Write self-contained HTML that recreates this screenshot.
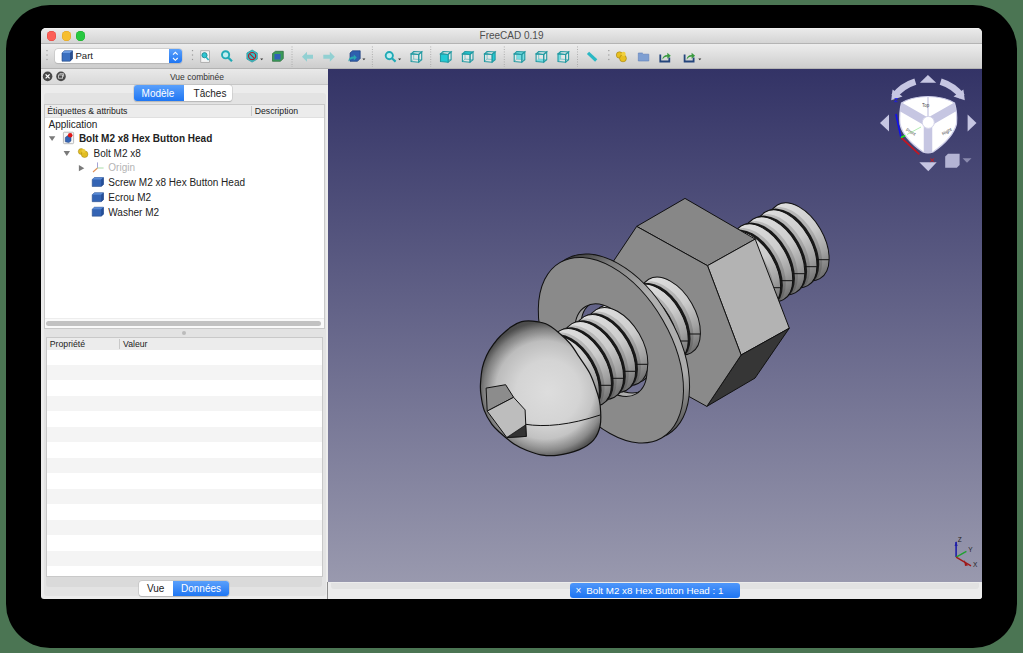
<!DOCTYPE html>
<html><head><meta charset="utf-8">
<style>
*{margin:0;padding:0;box-sizing:border-box}
html,body{width:1023px;height:653px;overflow:hidden;background:#4b7553;font-family:"Liberation Sans",sans-serif;color:#222}
.a{position:absolute}
#shadow{left:6px;top:5px;width:1011px;height:643px;background:#000;border-radius:44px}
#win{left:41px;top:28px;width:941px;height:570.6px;background:#ececec;border-radius:5px 5px 3px 3px;overflow:hidden}
#title{left:41px;top:28px;width:941px;height:16px;background:linear-gradient(#f4f4f4 0,#e9e9e9 1.5px,#d4d4d4 100%);border-bottom:1px solid #b4b4b4;border-radius:5px 5px 0 0}
#title .t{left:0;width:941px;top:2px;text-align:center;font-size:10px;color:#4d4d4d}
.tl{top:31.2px;width:9.4px;height:9.4px;border-radius:50%}
#toolbar{left:41px;top:44px;width:941px;height:25px;background:linear-gradient(#ededed,#cdcdcd);border-bottom:1px solid #b3b3b3}
#view{left:328px;top:69px;width:654px;height:513px;background:linear-gradient(#333366 0%,#9999ae 100%)}
#tabbar{left:328px;top:582px;width:654px;height:16.6px;background:#ececec;border-radius:0 0 3px 0}
.txt{white-space:nowrap;line-height:1}
</style></head>
<body>
<div id="shadow" class="a"></div>
<div id="win" class="a"></div>
<div id="title" class="a"><div class="a t">FreeCAD 0.19</div></div>
<div class="a tl" style="left:46.8px;background:#fc5f57;box-shadow:inset 0 0 0 0.5px #e0443e"></div>
<div class="a tl" style="left:61.7px;background:#f6be2f;box-shadow:inset 0 0 0 0.5px #dea123"></div>
<div class="a tl" style="left:76.1px;background:#27c840;box-shadow:inset 0 0 0 0.5px #1aab29"></div>
<div id="toolbar" class="a"></div>

<!-- combo -->
<div class="a" style="left:54.7px;top:48.8px;width:127px;height:14.4px;border-radius:3px;background:#fff;box-shadow:0 0 0 0.5px #c0c0c0,0 0.6px 1px #b0b0b0"></div>
<div class="a" style="left:169px;top:48.8px;width:12.7px;height:14.4px;border-radius:0 3px 3px 0;background:linear-gradient(#5aa0fb,#1f76f3)"></div>
<svg class="a" style="left:169px;top:48.8px" width="13" height="15" viewBox="0 0 13 15"><path d="M4,5.6 l2.35,-2.3 l2.35,2.3 M4,9 l2.35,2.3 l2.35,-2.3" fill="none" stroke="#fff" stroke-width="1.1"/></svg>
<svg class="a" style="left:60.5px;top:50px" width="13" height="12" viewBox="0 0 13 12"><polygon points="1,3 3.5,0.8 11.5,0.8 11.5,8.8 9,11.2 1,11.2" fill="#3a6fc0" stroke="#23457e" stroke-width="0.6"/><polygon points="1,3 3.5,0.8 11.5,0.8 9,3" fill="#6b9be0"/><polygon points="9,3 11.5,0.8 11.5,8.8 9,11.2" fill="#2a4f90"/></svg>
<div class="a txt" style="left:75.4px;top:51.3px;font-size:9.6px;color:#222">Part</div>

<!-- dock title -->
<div class="a" style="left:41px;top:69px;width:287px;height:16px;background:linear-gradient(#e9e9e9,#d9d9d9);border-bottom:1px solid #c6c6c6"></div>
<div class="a txt" style="left:41px;top:73px;width:312px;text-align:center;font-size:8.5px;color:#333">Vue combinée</div>

<!-- tab pane -->
<div class="a" style="left:44px;top:93px;width:282px;height:503px;background:#e3e3e3;border-radius:3px"></div>
<!-- tree frame -->
<div class="a" style="left:43.5px;top:104px;width:281px;height:225px;background:#fff;border:1px solid #c9c9c9"></div>
<div class="a" style="left:44.5px;top:105px;width:279px;height:12.5px;background:#ececec;border-bottom:1px solid #e0e0e0"></div>
<div class="a" style="left:251px;top:106px;width:1px;height:10px;background:#c9c9c9"></div>
<div class="a txt" style="left:47.3px;top:106.5px;font-size:8.7px;color:#222">Étiquettes &amp; attributs</div>
<div class="a txt" style="left:254.7px;top:106.5px;font-size:8.7px;color:#222">Description</div>

<!-- tree rows -->
<div class="a txt" style="left:48.5px;top:120px;font-size:10px;color:#222">Application</div>
<div class="a txt" style="left:78.9px;top:134px;font-size:10px;font-weight:bold;color:#222">Bolt M2 x8 Hex Button Head</div>
<div class="a txt" style="left:93.6px;top:148.5px;font-size:10px;color:#222">Bolt M2 x8</div>
<div class="a txt" style="left:108.3px;top:163px;font-size:10px;color:#b4b4b4">Origin</div>
<div class="a txt" style="left:108.3px;top:178px;font-size:10px;color:#222">Screw M2 x8 Hex Button Head</div>
<div class="a txt" style="left:108.3px;top:192.5px;font-size:10px;color:#222">Ecrou M2</div>
<div class="a txt" style="left:108.3px;top:207.5px;font-size:10px;color:#222">Washer M2</div>

<!-- tree scrollbar -->
<div class="a" style="left:44.5px;top:318px;width:279px;height:10px;background:#fafafa;border-top:1px solid #ededed"></div>
<div class="a" style="left:46px;top:320.7px;width:275px;height:5.8px;border-radius:3px;background:#c2c2c2"></div>

<!-- splitter -->
<div class="a" style="left:182px;top:330.5px;width:4px;height:4px;border-radius:50%;background:#bbb"></div>

<!-- property table -->
<div class="a" style="left:45.5px;top:337px;width:277px;height:239.5px;background:#fff;border:1px solid #c9c9c9"></div>
<div class="a" style="left:46.5px;top:338px;width:275px;height:12px;background:#ececec"></div>
<div class="a" style="left:119px;top:339px;width:1px;height:10px;background:#c9c9c9"></div>
<div class="a txt" style="left:49.8px;top:339.5px;font-size:8.7px;color:#222">Propriété</div>
<div class="a txt" style="left:123px;top:339.5px;font-size:8.7px;color:#222">Valeur</div>
<div class="a" style="left:46.5px;top:365px;width:275px;height:211px;background:repeating-linear-gradient(#f4f4f4 0,#f4f4f4 15.46px,#fff 15.46px,#fff 30.92px)"></div>
<!-- bottom band -->
<div class="a" style="left:46px;top:576.5px;width:276px;height:10px;background:#dadada;border-radius:0 0 3px 3px"></div>

<!-- Vue / Données -->
<div class="a" style="left:139px;top:581.3px;width:90px;height:14.4px;border-radius:3px;background:#fff;box-shadow:0 0 0 0.5px #bdbdbd, 0 0.5px 1px #aaa"></div>
<div class="a" style="left:173.2px;top:581.3px;width:55.8px;height:14.4px;border-radius:0 3px 3px 0;background:linear-gradient(#5aa0fb,#1f76f3)"></div>
<div class="a txt" style="left:147px;top:583.5px;font-size:10px;color:#222">Vue</div>
<div class="a txt" style="left:181px;top:583.5px;font-size:10px;color:#fff">Données</div>

<!-- Modele / Taches -->
<div class="a" style="left:134.4px;top:85.3px;width:97.3px;height:15.6px;border-radius:3px;background:#fff;box-shadow:0 0 0 0.5px #c4c4c4, 0 0.5px 1px #aaa"></div>
<div class="a" style="left:134.4px;top:85.3px;width:49.6px;height:15.6px;border-radius:3px 0 0 3px;background:linear-gradient(#5aa0fb,#1f76f3)"></div>
<div class="a txt" style="left:141.6px;top:89px;font-size:10px;color:#fff">Modèle</div>
<div class="a txt" style="left:193.6px;top:89px;font-size:10px;color:#222">Tâches</div>

<div id="view" class="a"></div>
<div id="tabbar" class="a"></div>
<div class="a" style="left:327px;top:582px;width:1px;height:16.6px;background:#8c8c8c"></div>
<div class="a" style="left:330.5px;top:583px;width:648px;height:5.7px;border-radius:0 0 3px 3px;background:#e2e2e2"></div>
<div class="a" style="left:570px;top:583px;width:170px;height:15px;border-radius:3px;background:linear-gradient(#4f97fa,#1d74f2)"></div>
<div class="a txt" style="left:575.5px;top:585.5px;font-size:10px;color:#fff">×</div>
<div class="a txt" style="left:586.2px;top:585.8px;font-size:9.8px;color:#fff">Bolt M2 x8 Hex Button Head : 1</div>

<!--TB-->
<svg class="a" style="left:0;top:0" width="1023" height="653" viewBox="0 0 1023 653">
<rect x="46.4" y="50.0" width="1.2" height="1.2" fill="#9a9a9a"/>
<rect x="46.4" y="54.4" width="1.2" height="1.2" fill="#9a9a9a"/>
<rect x="46.4" y="58.9" width="1.2" height="1.2" fill="#9a9a9a"/>
<rect x="191.9" y="50.0" width="1.2" height="1.2" fill="#9a9a9a"/>
<rect x="191.9" y="54.4" width="1.2" height="1.2" fill="#9a9a9a"/>
<rect x="191.9" y="58.9" width="1.2" height="1.2" fill="#9a9a9a"/>
<rect x="608.2" y="50.0" width="1.2" height="1.2" fill="#9a9a9a"/>
<rect x="608.2" y="54.4" width="1.2" height="1.2" fill="#9a9a9a"/>
<rect x="608.2" y="58.9" width="1.2" height="1.2" fill="#9a9a9a"/>
<line x1="292.0" y1="46.5" x2="292.0" y2="67" stroke="#9c9c9c" stroke-width="0.8" stroke-dasharray="0.9,1.6"/>
<line x1="372.4" y1="46.5" x2="372.4" y2="67" stroke="#9c9c9c" stroke-width="0.8" stroke-dasharray="0.9,1.6"/>
<line x1="430.7" y1="46.5" x2="430.7" y2="67" stroke="#9c9c9c" stroke-width="0.8" stroke-dasharray="0.9,1.6"/>
<line x1="504.3" y1="46.5" x2="504.3" y2="67" stroke="#9c9c9c" stroke-width="0.8" stroke-dasharray="0.9,1.6"/>
<line x1="577.5" y1="46.5" x2="577.5" y2="67" stroke="#9c9c9c" stroke-width="0.8" stroke-dasharray="0.9,1.6"/>
<rect x="200.8" y="50.8" width="8.6" height="11.5" fill="#f4f4f4" stroke="#9a9a9a" stroke-width="0.7"/>
<circle cx="204.5" cy="55.2" r="2.6" fill="#2ec6d2" stroke="#1f7f88" stroke-width="0.8"/><line x1="206" y1="57" x2="208.6" y2="60" stroke="#2ab8c4" stroke-width="1.6"/>
<circle cx="225.6" cy="54.8" r="3.6" fill="#bfeef0" stroke="#20aab6" stroke-width="1.9"/><line x1="228.2" y1="57.6" x2="232" y2="61.2" stroke="#20aab6" stroke-width="2.2"/>
<polygon points="252.1,50 257.3,53 257.3,59.1 252.1,62.1 246.9,59.1 246.9,53" fill="#2ec4cc" stroke="#2a8f96" stroke-width="0.7"/>
<circle cx="252.1" cy="56.1" r="3.6" fill="none" stroke="#b0202a" stroke-width="1.2"/><line x1="249.6" y1="53.6" x2="254.6" y2="58.6" stroke="#b0202a" stroke-width="1.2"/>
<path d="M260.2,58.4 l3,0 l-1.5,1.8z" fill="#333"/>
<polygon points="272.5,53.5 275.5,51.3 283.3,51.3 283.3,58.5 280.5,61.3 272.5,61.3" fill="#3a9a5a" stroke="#2a6a3a" stroke-width="0.7"/>
<rect x="274.5" y="54" width="6" height="5.5" fill="#3060b8"/>
<path d="M302,56.7 l5,-5 v3 h6 v4 h-6 v3 z" fill="#92d0d2"/>
<path d="M334.8,56.7 l-5,-5 v3 h-6.5 v4 h6.5 v3 z" fill="#92d0d2"/>
<polygon points="350,53 352.5,50.8 360.2,50.8 360.2,58.5 357.5,61.3 350,61.3" fill="#2f5fae" stroke="#1f3f7e" stroke-width="0.7"/>
<path d="M348.3,61.5 q0.5,-5 5.5,-5 v-2 l3,3 l-3,3 v-2 q-3,0 -5.5,3z" fill="#28a8b0"/>
<path d="M362.4,58.4 l3,0 l-1.5,1.8z" fill="#333"/>
<circle cx="389.3" cy="55.6" r="3.6" fill="#bfeef0" stroke="#20aab6" stroke-width="1.9"/><line x1="391.9" y1="58.3" x2="395.6" y2="61.6" stroke="#20aab6" stroke-width="2.2"/>
<path d="M398.1,58.4 l3,0 l-1.5,1.8z" fill="#333"/>
<polyline points="413.7,51.5 413.7,59.1 421.7,59.7" fill="none" stroke="#239aa2" stroke-width="0.8"/>
<line x1="413.7" y1="59.1" x2="411.1" y2="61.5" stroke="#239aa2" stroke-width="0.8"/>
<polygon points="411.1,53.9 413.7,51.5 421.7,51.9 418.7,54.5" fill="#f4fbfb" fill-opacity="0.35" stroke="#239aa2" stroke-width="1.1"/>
<polygon points="418.7,54.5 421.7,51.9 421.7,59.7 418.7,62.2" fill="#f4fbfb" fill-opacity="0.35" stroke="#239aa2" stroke-width="1.1"/>
<polygon points="411.1,53.9 418.7,54.5 418.7,62.2 411.1,61.5" fill="#f4fbfb" fill-opacity="0.35" stroke="#239aa2" stroke-width="1.1"/>
<polyline points="443.1,51.5 443.1,59.1 451.1,59.7" fill="none" stroke="#239aa2" stroke-width="0.8"/>
<line x1="443.1" y1="59.1" x2="440.5" y2="61.5" stroke="#239aa2" stroke-width="0.8"/>
<polygon points="440.5,53.9 443.1,51.5 451.1,51.9 448.1,54.5" fill="#f4fbfb" fill-opacity="0.35" stroke="#239aa2" stroke-width="1.1"/>
<polygon points="448.1,54.5 451.1,51.9 451.1,59.7 448.1,62.2" fill="#f4fbfb" fill-opacity="0.35" stroke="#239aa2" stroke-width="1.1"/>
<polygon points="440.5,53.9 448.1,54.5 448.1,62.2 440.5,61.5" fill="#22cad4" fill-opacity="1" stroke="#239aa2" stroke-width="1.1"/>
<polyline points="465.0,51.5 465.0,59.1 473.0,59.7" fill="none" stroke="#239aa2" stroke-width="0.8"/>
<line x1="465.0" y1="59.1" x2="462.4" y2="61.5" stroke="#239aa2" stroke-width="0.8"/>
<polygon points="462.4,53.9 465.0,51.5 473.0,51.9 470.0,54.5" fill="#22cad4" fill-opacity="1" stroke="#239aa2" stroke-width="1.1"/>
<polygon points="470.0,54.5 473.0,51.9 473.0,59.7 470.0,62.2" fill="#f4fbfb" fill-opacity="0.35" stroke="#239aa2" stroke-width="1.1"/>
<polygon points="462.4,53.9 470.0,54.5 470.0,62.2 462.4,61.5" fill="#f4fbfb" fill-opacity="0.35" stroke="#239aa2" stroke-width="1.1"/>
<polyline points="487.1,51.5 487.1,59.1 495.1,59.7" fill="none" stroke="#239aa2" stroke-width="0.8"/>
<line x1="487.1" y1="59.1" x2="484.5" y2="61.5" stroke="#239aa2" stroke-width="0.8"/>
<polygon points="484.5,53.9 487.1,51.5 495.1,51.9 492.1,54.5" fill="#f4fbfb" fill-opacity="0.35" stroke="#239aa2" stroke-width="1.1"/>
<polygon points="492.1,54.5 495.1,51.9 495.1,59.7 492.1,62.2" fill="#22cad4" fill-opacity="1" stroke="#239aa2" stroke-width="1.1"/>
<polygon points="484.5,53.9 492.1,54.5 492.1,62.2 484.5,61.5" fill="#f4fbfb" fill-opacity="0.35" stroke="#239aa2" stroke-width="1.1"/>
<polyline points="516.8,51.5 516.8,59.1 524.8,59.7" fill="none" stroke="#239aa2" stroke-width="0.8"/>
<line x1="516.8" y1="59.1" x2="514.2" y2="61.5" stroke="#239aa2" stroke-width="0.8"/>
<polygon points="516.8,51.5 524.8,51.9 524.8,59.7 516.8,59.1" fill="#22cad4" opacity="0.9"/>
<polygon points="514.2,53.9 516.8,51.5 524.8,51.9 521.8,54.5" fill="#f4fbfb" fill-opacity="0.35" stroke="#239aa2" stroke-width="1.1"/>
<polygon points="521.8,54.5 524.8,51.9 524.8,59.7 521.8,62.2" fill="#f4fbfb" fill-opacity="0.35" stroke="#239aa2" stroke-width="1.1"/>
<polygon points="514.2,53.9 521.8,54.5 521.8,62.2 514.2,61.5" fill="#f4fbfb" fill-opacity="0.35" stroke="#239aa2" stroke-width="1.1"/>
<polyline points="538.7,51.5 538.7,59.1 546.7,59.7" fill="none" stroke="#239aa2" stroke-width="0.8"/>
<line x1="538.7" y1="59.1" x2="536.1" y2="61.5" stroke="#239aa2" stroke-width="0.8"/>
<polygon points="536.1,61.5 543.7,62.2 546.7,59.7 538.7,59.1" fill="#22cad4" opacity="0.9"/>
<polygon points="536.1,53.9 538.7,51.5 546.7,51.9 543.7,54.5" fill="#f4fbfb" fill-opacity="0.35" stroke="#239aa2" stroke-width="1.1"/>
<polygon points="543.7,54.5 546.7,51.9 546.7,59.7 543.7,62.2" fill="#f4fbfb" fill-opacity="0.35" stroke="#239aa2" stroke-width="1.1"/>
<polygon points="536.1,53.9 543.7,54.5 543.7,62.2 536.1,61.5" fill="#f4fbfb" fill-opacity="0.35" stroke="#239aa2" stroke-width="1.1"/>
<polyline points="560.6,51.5 560.6,59.1 568.6,59.7" fill="none" stroke="#239aa2" stroke-width="0.8"/>
<line x1="560.6" y1="59.1" x2="558.0" y2="61.5" stroke="#239aa2" stroke-width="0.8"/>
<polygon points="558.0,53.9 560.6,51.5 560.6,59.1 558.0,61.5" fill="#22cad4" opacity="0.9"/>
<polygon points="558.0,53.9 560.6,51.5 568.6,51.9 565.6,54.5" fill="#f4fbfb" fill-opacity="0.35" stroke="#239aa2" stroke-width="1.1"/>
<polygon points="565.6,54.5 568.6,51.9 568.6,59.7 565.6,62.2" fill="#f4fbfb" fill-opacity="0.35" stroke="#239aa2" stroke-width="1.1"/>
<polygon points="558.0,53.9 565.6,54.5 565.6,62.2 558.0,61.5" fill="#f4fbfb" fill-opacity="0.35" stroke="#239aa2" stroke-width="1.1"/>
<line x1="588" y1="52.8" x2="596.2" y2="60.5" stroke="#2ab8c4" stroke-width="3.2"/>
<circle cx="619.5" cy="55" r="3.2" fill="#e8c020" stroke="#a08010" stroke-width="0.6"/><circle cx="623" cy="58.4" r="3.4" fill="#e8c020" stroke="#a08010" stroke-width="0.6"/><circle cx="623.5" cy="54" r="2.2" fill="#f0d040"/>
<path d="M638.3,53 h4 l1.2,1.2 h5.3 v6.8 h-10.5z" fill="#7f9fd2" stroke="#6080b8" stroke-width="0.6"/>
<path d="M660.3,54.5 v7 h9 v-4" fill="none" stroke="#24457c" stroke-width="1.8"/>
<path d="M662.3,59.5 q0.5,-4.5 5,-4.5 v-2.2 l3.5,3 l-3.5,3 v-2.2 q-3,0 -5,2.9z" fill="#3a9a40"/>
<path d="M684.6,54.5 v7 h9 v-4" fill="none" stroke="#24457c" stroke-width="1.8"/>
<path d="M686.6,59.5 q0.5,-4.5 5,-4.5 v-2.2 l3.5,3 l-3.5,3 v-2.2 q-3,0 -5,2.9z" fill="#3a9a40"/>
<path d="M698.3,58.4 l3,0 l-1.5,1.8z" fill="#333"/>
</svg>
<!--/TB-->
<!--NAV-->
<svg class="a" style="left:0;top:0" width="1023" height="653" viewBox="0 0 1023 653">
<polygon points="927.9,74.9 936.2,82.7 919.9,82.7" fill="#c6c6e2"/>
<polygon points="880,122.9 889,114.5 889,131.4" fill="#c6c6e2"/>
<polygon points="976.5,122.9 967.6,114.5 967.6,131.4" fill="#c6c6e2"/>
<polygon points="919.3,162.2 936.7,162.2 928.3,171.2" fill="#c6c6e2"/>
<path d="M914.4,78.5 A46.5,46.5 0 0,0 891.4,94.4 L896.5,98.4 A40.0,40.0 0 0,1 916.3,84.7 Z" fill="#c6c6e2"/>
<path d="M941.6,78.5 A46.5,46.5 0 0,1 964.6,94.4 L959.5,98.4 A40.0,40.0 0 0,0 939.7,84.7 Z" fill="#c6c6e2"/>
<polygon points="891.2,100.2 892.6,89.5 902.5,96.5" fill="#c6c6e2"/>
<polygon points="964.8,100.2 963.4,89.5 953.5,96.5" fill="#c6c6e2"/>
<defs><clipPath id="cubeclip"><path d="M928,96.5 Q944,96.5 954.5,103 Q957.5,113 956.5,124 Q953,138 933,152 Q928,154 923,152 Q903,138 900,124 Q899,113 901.5,103 Q912,96.5 928,96.5Z"/></clipPath></defs>
<path d="M928,96.5 Q944,96.5 954.5,103 Q957.5,113 956.5,124 Q953,138 933,152 Q928,154 923,152 Q903,138 900,124 Q899,113 901.5,103 Q912,96.5 928,96.5Z" fill="#fff" stroke="#d0d0ea" stroke-width="1.2"/>
<g clip-path="url(#cubeclip)"><path d="M928,122.5 L893,102.5 M928,122.5 L963,102.5 M928,122.5 L928,160" stroke="#c6c6e2" stroke-width="8.5"/></g>
<line x1="928" y1="97" x2="928" y2="117" stroke="#c6c6e2" stroke-width="1.2"/>
<circle cx="928.3" cy="122.4" r="6" fill="#fff" stroke="#d4d4ea" stroke-width="1"/>
<text x="922" y="107" font-size="4.5" font-family="Liberation Sans" fill="#111" opacity="0.8">Top</text>
<text x="906" y="133" font-size="4.5" font-family="Liberation Sans" fill="#111" opacity="0.8" transform="rotate(30 910 131)">Front</text>
<text x="941" y="134" font-size="4.5" font-family="Liberation Sans" fill="#111" opacity="0.8" transform="rotate(-30 945 131)">Right</text>
<line x1="900.9" y1="137.4" x2="919.3" y2="154.3" stroke="#c8141e" stroke-width="1.6"/>
<line x1="900.9" y1="137.4" x2="895.9" y2="114" stroke="#1010f0" stroke-width="1.6"/>
<line x1="900.9" y1="137.4" x2="905.2" y2="135.6" stroke="#20e020" stroke-width="1.6"/>
<line x1="907" y1="134.5" x2="921" y2="127" stroke="#7ee07e" stroke-width="0.6"/>
<path d="M894.5,98.5 h3 l-3,3.2 h3" fill="none" stroke="#1a1af0" stroke-width="0.8"/>
<path d="M930.5,158.3 l3.4,3.8 M933.9,158.3 l-3.4,3.8" stroke="#d01818" stroke-width="0.9"/>
<polygon points="945.2,156.5 948,153.8 959.6,153.8 959.6,165 956.8,167.7 945.2,167.7" fill="#b4b4d4"/>
<polygon points="962.6,158.3 971.5,158.3 967,162.7" fill="#8a8aae"/>
</svg>
<!--/NAV-->
<!--MISC-->
<svg class="a" style="left:0;top:0" width="1023" height="653" viewBox="0 0 1023 653">
<polygon points="48.9,136.3 55.3,136.3 52.1,141" fill="#7a7a7a"/>
<polygon points="63.6,150.9 70,150.9 66.8,156" fill="#7a7a7a"/>
<polygon points="78.9,165.1 84.3,168.2 78.9,171.3" fill="#7a7a7a"/>
<rect x="63.4" y="132.2" width="10.2" height="11.5" rx="1" fill="#f6f6f6" stroke="#a0a0a0" stroke-width="0.7"/>
<polygon points="65.3,137.5 67.5,135.8 71,136.6 71,141 68.8,142.6 65.3,141.8" fill="#3565b5" stroke="#1d3d78" stroke-width="0.5"/>
<circle cx="70.2" cy="135.2" r="2.3" fill="#e01a1a"/>
<circle cx="81.2" cy="151.5" r="2.9" fill="#e2bd22" stroke="#9e8210" stroke-width="0.5"/><circle cx="84.6" cy="154.2" r="3.3" fill="#e2bd22" stroke="#9e8210" stroke-width="0.5"/><circle cx="83.5" cy="151" r="2" fill="#eccb3a"/>
<line x1="97.5" y1="168" x2="97.5" y2="162.4" stroke="#9a9ad0" stroke-width="0.9"/><line x1="97.5" y1="168" x2="93" y2="172" stroke="#e0925a" stroke-width="1.1"/><line x1="97.5" y1="168" x2="103.6" y2="168" stroke="#a0d8a0" stroke-width="0.9"/>
<polygon points="92.2,179.5 94.5,177.5 103.5,177.5 103.5,184.5 101.2,186.5 92.2,186.5" fill="#3464b4" stroke="#22457e" stroke-width="0.5"/>
<polygon points="92.2,179.5 94.5,177.5 103.5,177.5 101.2,179.5" fill="#5a8ad4"/>
<polygon points="101.2,179.5 103.5,177.5 103.5,184.5 101.2,186.5" fill="#254e96"/>
<polygon points="92.2,194.7 94.5,192.7 103.5,192.7 103.5,199.7 101.2,201.7 92.2,201.7" fill="#3464b4" stroke="#22457e" stroke-width="0.5"/>
<polygon points="92.2,194.7 94.5,192.7 103.5,192.7 101.2,194.7" fill="#5a8ad4"/>
<polygon points="101.2,194.7 103.5,192.7 103.5,199.7 101.2,201.7" fill="#254e96"/>
<polygon points="92.2,209.2 94.5,207.2 103.5,207.2 103.5,214.2 101.2,216.2 92.2,216.2" fill="#3464b4" stroke="#22457e" stroke-width="0.5"/>
<polygon points="92.2,209.2 94.5,207.2 103.5,207.2 101.2,209.2" fill="#5a8ad4"/>
<polygon points="101.2,209.2 103.5,207.2 103.5,214.2 101.2,216.2" fill="#254e96"/>
<circle cx="47.6" cy="76.4" r="4.8" fill="#4a4a4a"/><path d="M45.6,74.4 l4,4 M49.6,74.4 l-4,4" stroke="#fff" stroke-width="1.3"/>
<circle cx="61" cy="76.4" r="4.8" fill="#4a4a4a"/><rect x="58.6" y="75" width="4" height="3.2" fill="none" stroke="#ddd" stroke-width="0.8"/><path d="M59.8,74.5 v-0.8 h3.8 v3" fill="none" stroke="#ddd" stroke-width="0.8"/>
<line x1="956.1" y1="557.1" x2="956.1" y2="542" stroke="#2020a8" stroke-width="1.6"/><polygon points="954.6,546 957.6,546 956.1,541" fill="#2020a8"/>
<line x1="956.1" y1="557.1" x2="966.4" y2="551.4" stroke="#20a030" stroke-width="1.4"/>
<line x1="956.1" y1="557.1" x2="971" y2="565.8" stroke="#a01818" stroke-width="1.4"/><polygon points="964,560 968,565.5 965,566" fill="#a01818"/>
<text x="957.8" y="541.5" font-size="6.5" font-family="Liberation Sans" fill="#222">Z</text>
<text x="968.3" y="552" font-size="6.5" font-family="Liberation Sans" fill="#222">Y</text>
<text x="973" y="567" font-size="6.5" font-family="Liberation Sans" fill="#222">X</text>
</svg>
<!--/MISC-->
<!--BOLT-->
<svg class="a" style="left:0;top:0" width="1023" height="653" viewBox="0 0 1023 653">
<defs>
<linearGradient id="cg" x1="0" y1="0" x2="0" y2="1"><stop offset="0" stop-color="#dedede"/><stop offset="0.45" stop-color="#cccccc"/><stop offset="0.75" stop-color="#a2a2a2"/><stop offset="1" stop-color="#6e6e6e"/></linearGradient>
<radialGradient id="hg" cx="548" cy="392" r="80" gradientUnits="userSpaceOnUse"><stop offset="0" stop-color="#dddddd"/><stop offset="0.4" stop-color="#d4d4d4"/><stop offset="0.7" stop-color="#b8b8b8"/><stop offset="1" stop-color="#8a8a8a"/></radialGradient>
<radialGradient id="hrim" cx="545" cy="390" r="68" gradientUnits="userSpaceOnUse"><stop offset="0.72" stop-color="#000" stop-opacity="0"/><stop offset="0.9" stop-color="#000" stop-opacity="0.25"/><stop offset="1" stop-color="#000" stop-opacity="0.5"/></radialGradient>
<linearGradient id="rg" x1="0" y1="0" x2="0" y2="1"><stop offset="0" stop-color="#3a3a3a"/><stop offset="0.12" stop-color="#7c7c7c"/><stop offset="0.35" stop-color="#b0b0b0"/><stop offset="0.78" stop-color="#acacac"/><stop offset="0.9" stop-color="#7e7e7e"/><stop offset="1" stop-color="#585858"/></linearGradient>
</defs>
<ellipse cx="0" cy="0" rx="25.2" ry="42.5" transform="translate(798.65,241.80) rotate(-30.0)" fill="url(#cg)" stroke="#111" stroke-width="1"/>
<ellipse cx="0" cy="0" rx="25.2" ry="42.5" transform="translate(791.73,245.80) rotate(-30.0)" fill="#000" fill-opacity="0.14"/>
<ellipse cx="0" cy="0" rx="25.2" ry="42.5" transform="translate(788.78,247.50) rotate(-30.0)" fill="#1a1a1a"/>
<ellipse cx="0" cy="0" rx="25.2" ry="42.5" transform="translate(786.53,248.80) rotate(-30.0)" fill="url(#cg)" stroke="#111" stroke-width="1"/>
<ellipse cx="0" cy="0" rx="25.2" ry="42.5" transform="translate(779.60,252.80) rotate(-30.0)" fill="#000" fill-opacity="0.14"/>
<ellipse cx="0" cy="0" rx="25.2" ry="42.5" transform="translate(776.66,254.50) rotate(-30.0)" fill="#1a1a1a"/>
<ellipse cx="0" cy="0" rx="25.2" ry="42.5" transform="translate(774.41,255.80) rotate(-30.0)" fill="url(#cg)" stroke="#111" stroke-width="1"/>
<ellipse cx="0" cy="0" rx="25.2" ry="42.5" transform="translate(767.48,259.80) rotate(-30.0)" fill="#000" fill-opacity="0.14"/>
<ellipse cx="0" cy="0" rx="25.2" ry="42.5" transform="translate(764.53,261.50) rotate(-30.0)" fill="#1a1a1a"/>
<ellipse cx="0" cy="0" rx="25.2" ry="42.5" transform="translate(762.28,262.80) rotate(-30.0)" fill="url(#cg)" stroke="#111" stroke-width="1"/>
<ellipse cx="0" cy="0" rx="25.2" ry="42.5" transform="translate(755.35,266.80) rotate(-30.0)" fill="#000" fill-opacity="0.14"/>
<ellipse cx="0" cy="0" rx="25.2" ry="42.5" transform="translate(752.41,268.50) rotate(-30.0)" fill="#1a1a1a"/>
<ellipse cx="0" cy="0" rx="25.2" ry="42.5" transform="translate(750.16,269.80) rotate(-30.0)" fill="url(#cg)" stroke="#111" stroke-width="1"/>
<ellipse cx="0" cy="0" rx="25.2" ry="42.5" transform="translate(743.23,273.80) rotate(-30.0)" fill="#000" fill-opacity="0.14"/>
<ellipse cx="0" cy="0" rx="25.2" ry="42.5" transform="translate(740.28,275.50) rotate(-30.0)" fill="#1a1a1a"/>
<ellipse cx="0" cy="0" rx="25.2" ry="42.5" transform="translate(738.03,276.80) rotate(-30.0)" fill="url(#cg)" stroke="#111" stroke-width="1"/>
<ellipse cx="0" cy="0" rx="25.2" ry="42.5" transform="translate(731.10,280.80) rotate(-30.0)" fill="#000" fill-opacity="0.14"/>
<ellipse cx="0" cy="0" rx="25.2" ry="42.5" transform="translate(728.16,282.50) rotate(-30.0)" fill="#1a1a1a"/>
<ellipse cx="0" cy="0" rx="25.2" ry="42.5" transform="translate(725.91,283.80) rotate(-30.0)" fill="url(#cg)" stroke="#111" stroke-width="1"/>
<line x1="816.6" y1="259.7" x2="829.1" y2="259.7" stroke="#111" stroke-width="1"/>
<line x1="804.5" y1="266.7" x2="816.9" y2="266.7" stroke="#111" stroke-width="1"/>
<line x1="792.3" y1="273.7" x2="804.8" y2="273.7" stroke="#111" stroke-width="1"/>
<line x1="780.2" y1="280.7" x2="792.7" y2="280.7" stroke="#111" stroke-width="1"/>
<line x1="768.1" y1="287.7" x2="780.6" y2="287.7" stroke="#111" stroke-width="1"/>
<line x1="756.0" y1="294.7" x2="768.5" y2="294.7" stroke="#111" stroke-width="1"/>
<polygon points="685.0,198.4 755.2,239.1 707.5,265.7 636.7,226.4" fill="#878787" stroke="#111" stroke-width="1"/>
<polygon points="707.5,265.7 755.2,239.1 789.3,328.2 741.1,355.0" fill="#b3b3b3" stroke="#111" stroke-width="1"/>
<polygon points="741.1,355.0 789.3,328.2 755.0,378.1 706.8,406.4" fill="#363636" stroke="#111" stroke-width="1"/>
<polygon points="636.7,226.4 707.5,265.7 741.1,355.0 706.8,406.4 636.0,367.1 602.4,277.8" fill="#8a8a8a" stroke="#111" stroke-width="1"/>
<ellipse cx="0" cy="0" rx="25.2" ry="42.5" transform="translate(669.96,316.10) rotate(-30.0)" fill="url(#cg)" stroke="#111" stroke-width="1"/>
<ellipse cx="0" cy="0" rx="25.2" ry="42.5" transform="translate(663.03,320.10) rotate(-30.0)" fill="#000" fill-opacity="0.14"/>
<ellipse cx="0" cy="0" rx="25.2" ry="42.5" transform="translate(660.09,321.80) rotate(-30.0)" fill="#1a1a1a"/>
<ellipse cx="0" cy="0" rx="25.2" ry="42.5" transform="translate(657.84,323.10) rotate(-30.0)" fill="url(#cg)" stroke="#111" stroke-width="1"/>
<ellipse cx="0" cy="0" rx="25.2" ry="42.5" transform="translate(650.91,327.10) rotate(-30.0)" fill="#000" fill-opacity="0.14"/>
<ellipse cx="0" cy="0" rx="25.2" ry="42.5" transform="translate(647.97,328.80) rotate(-30.0)" fill="#1a1a1a"/>
<ellipse cx="0" cy="0" rx="25.2" ry="42.5" transform="translate(645.71,330.10) rotate(-30.0)" fill="url(#cg)" stroke="#111" stroke-width="1"/>
<ellipse cx="0" cy="0" rx="25.2" ry="42.5" transform="translate(638.79,334.10) rotate(-30.0)" fill="#000" fill-opacity="0.14"/>
<ellipse cx="0" cy="0" rx="25.2" ry="42.5" transform="translate(635.84,335.80) rotate(-30.0)" fill="#1a1a1a"/>
<ellipse cx="0" cy="0" rx="25.2" ry="42.5" transform="translate(633.59,337.10) rotate(-30.0)" fill="url(#cg)" stroke="#111" stroke-width="1"/>
<ellipse cx="0" cy="0" rx="25.2" ry="42.5" transform="translate(626.66,341.10) rotate(-30.0)" fill="#000" fill-opacity="0.14"/>
<ellipse cx="0" cy="0" rx="25.2" ry="42.5" transform="translate(623.72,342.80) rotate(-30.0)" fill="#1a1a1a"/>
<ellipse cx="0" cy="0" rx="25.2" ry="42.5" transform="translate(621.47,344.10) rotate(-30.0)" fill="url(#cg)" stroke="#111" stroke-width="1"/>
<line x1="687.9" y1="334.0" x2="700.4" y2="334.0" stroke="#111" stroke-width="1"/>
<line x1="675.8" y1="341.0" x2="688.3" y2="341.0" stroke="#111" stroke-width="1"/>
<line x1="663.6" y1="348.0" x2="676.1" y2="348.0" stroke="#111" stroke-width="1"/>
<line x1="651.5" y1="355.0" x2="664.0" y2="355.0" stroke="#111" stroke-width="1"/>
<path fill-rule="evenodd" d="M-60.0,0 a60.0,101.4 0 1,0 120.0,0 a60.0,101.4 0 1,0 -120.0,0 Z M-29.9,0 a29.9,50.5 0 1,0 59.8,0 a29.9,50.5 0 1,0 -59.8,0 Z" transform="translate(616.96,346.70) rotate(-30.0)" fill="url(#rg)" stroke="#111" stroke-width="1"/>
<path fill-rule="evenodd" d="M-60.0,0 a60.0,101.4 0 1,0 120.0,0 a60.0,101.4 0 1,0 -120.0,0 Z M-29.9,0 a29.9,50.5 0 1,0 59.8,0 a29.9,50.5 0 1,0 -59.8,0 Z" transform="translate(610.90,350.20) rotate(-30.0)" fill="#8a8a8a" stroke="#111" stroke-width="1"/>
<ellipse cx="0" cy="0" rx="25.2" ry="42.5" transform="translate(617.40,346.45) rotate(-30.0)" fill="url(#cg)" stroke="#111" stroke-width="1"/>
<ellipse cx="0" cy="0" rx="25.2" ry="42.5" transform="translate(610.47,350.45) rotate(-30.0)" fill="#000" fill-opacity="0.14"/>
<ellipse cx="0" cy="0" rx="25.2" ry="42.5" transform="translate(607.52,352.15) rotate(-30.0)" fill="#1a1a1a"/>
<ellipse cx="0" cy="0" rx="25.2" ry="42.5" transform="translate(605.27,353.45) rotate(-30.0)" fill="url(#cg)" stroke="#111" stroke-width="1"/>
<ellipse cx="0" cy="0" rx="25.2" ry="42.5" transform="translate(598.34,357.45) rotate(-30.0)" fill="#000" fill-opacity="0.14"/>
<ellipse cx="0" cy="0" rx="25.2" ry="42.5" transform="translate(595.40,359.15) rotate(-30.0)" fill="#1a1a1a"/>
<ellipse cx="0" cy="0" rx="25.2" ry="42.5" transform="translate(593.15,360.45) rotate(-30.0)" fill="url(#cg)" stroke="#111" stroke-width="1"/>
<ellipse cx="0" cy="0" rx="25.2" ry="42.5" transform="translate(586.22,364.45) rotate(-30.0)" fill="#000" fill-opacity="0.14"/>
<ellipse cx="0" cy="0" rx="25.2" ry="42.5" transform="translate(583.27,366.15) rotate(-30.0)" fill="#1a1a1a"/>
<ellipse cx="0" cy="0" rx="25.2" ry="42.5" transform="translate(581.02,367.45) rotate(-30.0)" fill="url(#cg)" stroke="#111" stroke-width="1"/>
<ellipse cx="0" cy="0" rx="25.2" ry="42.5" transform="translate(574.09,371.45) rotate(-30.0)" fill="#000" fill-opacity="0.14"/>
<ellipse cx="0" cy="0" rx="25.2" ry="42.5" transform="translate(571.15,373.15) rotate(-30.0)" fill="#1a1a1a"/>
<ellipse cx="0" cy="0" rx="25.2" ry="42.5" transform="translate(568.90,374.45) rotate(-30.0)" fill="url(#cg)" stroke="#111" stroke-width="1"/>
<line x1="635.3" y1="364.3" x2="647.8" y2="364.3" stroke="#111" stroke-width="1"/>
<line x1="623.2" y1="371.3" x2="635.7" y2="371.3" stroke="#111" stroke-width="1"/>
<line x1="611.1" y1="378.3" x2="623.6" y2="378.3" stroke="#111" stroke-width="1"/>
<line x1="598.9" y1="385.3" x2="611.4" y2="385.3" stroke="#111" stroke-width="1"/>
<path d="M480.5,383.6 C480.8,379.1 481.4,372.4 482.4,367.7 C483.4,363.0 484.8,359.3 486.6,355.4 C488.4,351.5 491.0,347.7 493.4,344.4 C495.8,341.1 497.8,338.6 500.7,335.8 C503.6,333.0 507.0,329.7 510.5,327.3 C514.0,324.9 517.9,322.7 521.6,321.7 C525.3,320.7 528.6,320.8 532.6,321.1 C536.6,321.5 541.5,322.0 545.8,323.8 C550.1,325.6 554.2,328.9 558.2,332.2 C562.2,335.5 566.5,339.4 570.0,343.5 C573.5,347.6 575.7,351.6 579.0,356.7 C582.3,361.8 586.9,367.7 590.0,373.8 C593.1,379.9 595.7,388.1 597.4,393.4 C599.1,398.7 599.7,400.5 600.2,405.8 C600.7,411.1 601.3,419.7 600.2,425.4 C599.1,431.1 597.1,436.0 593.5,440.1 C589.9,444.2 584.9,447.3 578.8,449.9 C572.7,452.4 563.0,454.6 556.7,455.4 C550.4,456.2 545.8,455.6 540.8,454.8 C535.8,454.0 531.5,452.3 527.0,450.5 C522.5,448.7 518.3,446.8 514.0,444.0 C509.7,441.2 504.7,436.8 501.0,433.5 C497.3,430.2 494.7,428.3 491.9,424.4 C489.1,420.5 485.9,415.1 484.1,410.1 C482.3,405.1 481.5,398.9 480.9,394.5 C480.3,390.1 480.2,388.1 480.5,383.6 Z" fill="url(#hg)"/>
<path d="M480.5,383.6 C480.8,379.1 481.4,372.4 482.4,367.7 C483.4,363.0 484.8,359.3 486.6,355.4 C488.4,351.5 491.0,347.7 493.4,344.4 C495.8,341.1 497.8,338.6 500.7,335.8 C503.6,333.0 507.0,329.7 510.5,327.3 C514.0,324.9 517.9,322.7 521.6,321.7 C525.3,320.7 528.6,320.8 532.6,321.1 C536.6,321.5 541.5,322.0 545.8,323.8 C550.1,325.6 554.2,328.9 558.2,332.2 C562.2,335.5 566.5,339.4 570.0,343.5 C573.5,347.6 575.7,351.6 579.0,356.7 C582.3,361.8 586.9,367.7 590.0,373.8 C593.1,379.9 595.7,388.1 597.4,393.4 C599.1,398.7 599.7,400.5 600.2,405.8 C600.7,411.1 601.3,419.7 600.2,425.4 C599.1,431.1 597.1,436.0 593.5,440.1 C589.9,444.2 584.9,447.3 578.8,449.9 C572.7,452.4 563.0,454.6 556.7,455.4 C550.4,456.2 545.8,455.6 540.8,454.8 C535.8,454.0 531.5,452.3 527.0,450.5 C522.5,448.7 518.3,446.8 514.0,444.0 C509.7,441.2 504.7,436.8 501.0,433.5 C497.3,430.2 494.7,428.3 491.9,424.4 C489.1,420.5 485.9,415.1 484.1,410.1 C482.3,405.1 481.5,398.9 480.9,394.5 C480.3,390.1 480.2,388.1 480.5,383.6 Z" fill="url(#hrim)" stroke="#111" stroke-width="1.2"/>
<path d="M524.9,424.2 C545,427.5 570,425 600.2,415" fill="none" stroke="#111" stroke-width="1"/>
<polygon points="486.1,388.1 505.6,384.7 513.6,397.3 487.2,411.1" fill="#8c8c8c" stroke="#111" stroke-width="1"/>
<polygon points="487.2,411.1 513.6,397.3 525.1,409.9 526.3,436.4 506.8,437.5" fill="#bdbdbd" stroke="#111" stroke-width="1"/>
<polygon points="506.8,437.5 526.3,436.4 525.5,425.0" fill="#333" stroke="#111" stroke-width="0.8"/>
</svg>
<!--/BOLT-->
</body></html>
